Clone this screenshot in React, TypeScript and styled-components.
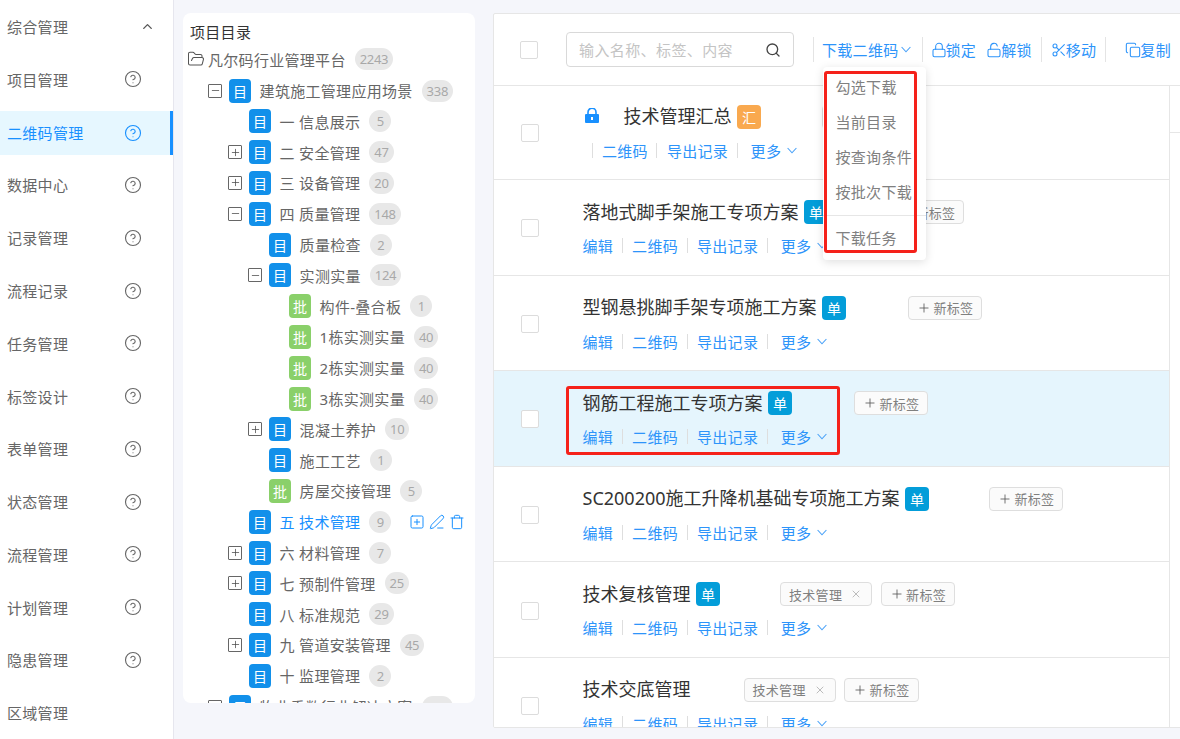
import React from "react";
import styled, { createGlobalStyle } from "styled-components";
import {
  ChevronUp,
  CircleHelp,
  Copy,
  FolderOpen,
  Lock,
  LockOpen,
  Minus,
  PenLine,
  Plus,
  Scissors,
  Search,
  SquarePlus,
  Trash,
  X,
} from "lucide-react";

const FONT = `"Noto Sans", "Noto Sans CJK SC", sans-serif`;
const LINK = "#2d94fa";

const Global = createGlobalStyle`
  html, body { margin: 0; padding: 0; height: 100%; overflow: hidden; background: #f5f6fb; }
  body { font-family: ${FONT}; letter-spacing: .3px; }
  * { box-sizing: border-box; }
`;

const Page = styled.div`
  display: flex;
  width: 1180px;
  height: 739px;
  overflow: hidden;
  background: #f5f6fb;
`;

/* ---------- sidebar ---------- */
const Sidebar = styled.nav`
  display: flex;
  flex-direction: column;
  flex: 0 0 174px;
  height: 739px;
  padding-top: 4.7px;
  background: #fff;
  border-right: 1px solid #e6e6ee;
  overflow: hidden;
`;

const SideItem = styled.div<{ $active?: boolean; $chevron?: boolean }>`
  display: flex;
  flex: none;
  align-items: center;
  justify-content: space-between;
  height: 44px;
  margin-top: ${(p) => (p.$active ? 0.5 : 0)}px;
  margin-bottom: ${(p) => (p.$active ? 8.27 : 8.77)}px;
  padding: 0 ${(p) => (p.$chevron ? 18 : p.$active ? 28 : 31)}px 0 7px;
  font-size: 15px;
  color: ${(p) => (p.$active ? "#1890ff" : "#666")};
  background: ${(p) => (p.$active ? "#e6f7ff" : "transparent")};
  border-right: ${(p) => (p.$active ? "3px solid #1890ff" : "0")};
`;

/* ---------- tree ---------- */
const TreePanel = styled.section`
  flex: 0 0 292px;
  height: 690px;
  margin: 13px 18px 0 9px;
  padding-top: 9px;
  background: #fff;
  border-radius: 8px;
  overflow: hidden;
`;

const TreeTitle = styled.div`
  height: 21.6px;
  line-height: 21px;
  padding-left: 7px;
  font-size: 15px;
  color: #333;
`;

const TreeRow = styled.div<{ $level: number }>`
  display: flex;
  align-items: center;
  height: ${(p) => (p.$level === 0 ? 31.6 : 30.8)}px;
  padding-left: ${(p) => (p.$level === 0 ? 4 : 25 + (p.$level - 1) * 20)}px;
  padding-right: 10px;
`;

const ExpanderSlot = styled.span`
  flex: 0 0 21px;
  display: flex;
`;

const Expander = styled.span`
  display: flex;
  align-items: center;
  justify-content: center;
  width: 14px;
  height: 14px;
  border: 1px solid #666;
  border-radius: 1px;
  color: #444;
`;

const TypeBadge = styled.span<{ $kind: "dir" | "batch" }>`
  flex: 0 0 22px;
  height: 24px;
  display: flex;
  align-items: center;
  justify-content: center;
  margin-right: 8.6px;
  border-radius: 4px;
  font-size: 14px;
  letter-spacing: 0;
  color: #fff;
  background: ${(p) => (p.$kind === "dir" ? "#1290ea" : "#8ad06a")};
`;

const TreeLabel = styled.span<{ $active?: boolean }>`
  font-size: 15px;
  white-space: pre;
  color: ${(p) => (p.$active ? "#1890ff" : "#666")};
`;

const RootLabel = styled(TreeLabel)`
  margin-left: 3px;
`;

const Count = styled.span`
  min-width: 22px;
  height: 22px;
  margin-left: 9px;
  padding: 0 5px;
  display: flex;
  align-items: center;
  justify-content: center;
  border-radius: 11px;
  background: #e8e8e8;
  color: #a8a8a8;
  font-size: 13px;
  letter-spacing: -0.3px;
`;

const TreeActions = styled.span`
  margin-left: auto;
  display: flex;
  align-items: center;
  gap: 4px;
  color: #1890ff;
`;

/* ---------- main ---------- */
const Main = styled.section`
  position: relative;
  flex: 0 0 720px;
  height: 715px;
  margin-top: 13px;
  background: #fff;
  border: 1px solid #e6e6e6;
  border-radius: 2px;
  overflow: hidden;
`;

const Toolbar = styled.header`
  display: flex;
  align-items: center;
  height: 72px;
  padding-left: 26px;
  border-bottom: 1px solid #e6e6e6;
`;

const Check = styled.span<{ $nudge?: boolean }>`
  flex: 0 0 18px;
  height: 18px;
  margin-top: ${(p) => (p.$nudge ? 2 : 0)}px;
  background: #fff;
  border: 1px solid #dcdcdc;
  border-radius: 2px;
`;

const SearchBox = styled.div`
  display: flex;
  align-items: center;
  flex: 0 0 228px;
  min-width: 0;
  height: 35px;
  margin: 0 19px 0 28px;
  padding: 0 12px;
  border: 1px solid #d9d9d9;
  border-radius: 4px;
  color: #444;
`;

const SearchInput = styled.input`
  flex: 1;
  width: 100%;
  min-width: 0;
  border: 0;
  outline: 0;
  padding: 0;
  font: 15px ${FONT};
  letter-spacing: .4px;
  background: transparent;
  &::placeholder { color: #c4c4c4; opacity: 1; }
`;

const ToolSep = styled.span<{ $after?: number }>`
  flex: 0 0 1px;
  height: 25px;
  background: #e4e4e4;
  margin-right: ${(p) => p.$after ?? 10}px;
`;

const ToolItem = styled.span<{ $after?: number }>`
  display: inline-flex;
  align-items: center;
  flex: none;
  margin-right: ${(p) => p.$after ?? 9}px;
  font-size: 15px;
  color: ${LINK};
  white-space: nowrap;
`;

const ToolIcon = styled.span`
  display: flex;
  margin-right: -1px;
`;

const Caret = ({ gap = 2 }: { gap?: number }) => (
  <svg width="10" height="7" viewBox="0 0 10 7" fill="none" stroke="#4aa2f8" strokeWidth="1.1" style={{ marginLeft: gap }}>
    <path d="M.6 1 5 5.8 9.4 1" />
  </svg>
);

const Menu = styled.div`
  position: absolute;
  left: 329px;
  top: 53px;
  z-index: 5;
  width: 103px;
  height: 193px;
  padding-top: 2.5px;
  background: #fff;
  border-radius: 4px;
  box-shadow: 0 2px 10px rgba(0, 0, 0, .13);
`;

const MenuItem = styled.div`
  height: 35px;
  line-height: 35px;
  padding-left: 12.5px;
  font-size: 15px;
  color: #808080;
  white-space: nowrap;
`;

const MenuDivider = styled.div`
  height: 1px;
  margin: 5.5px 0 5px;
  background: #e6e6e6;
`;

const Annotation = styled.div<{ $left: number; $top: number; $w: number; $h: number }>`
  position: absolute;
  left: ${(p) => p.$left}px;
  top: ${(p) => p.$top}px;
  width: ${(p) => p.$w}px;
  height: ${(p) => p.$h}px;
  border: 3px solid #f5211a;
  border-radius: 3px;
  pointer-events: none;
`;

const Body = styled.div`
  display: flex;
`;

const List = styled.div`
  flex: 0 0 676px;
  border-right: 1px solid #e6e6e6;
`;

const Strip = styled.div`
  flex: 1;
  height: 47px;
  border-bottom: 1px solid #e6e6e6;
`;

const Row = styled.article<{ $first?: boolean; $selected?: boolean }>`
  position: relative;
  display: flex;
  align-items: center;
  height: ${(p) => (p.$first ? 94 : 95.6)}px;
  padding-left: 27px;
  background: ${(p) => (p.$selected ? "#e5f5fd" : "#fff")};
  border-bottom: 1px solid #e6e6e6;
`;

const RowBody = styled.div<{ $first?: boolean }>`
  align-self: flex-start;
  margin-left: 43.5px;
  padding-top: ${(p) => (p.$first ? 19 : 20)}px;
`;

const TitleLine = styled.div`
  display: flex;
  align-items: center;
  height: 24px;
`;

const LockMark = styled.svg`
  flex: none;
  margin: -3px 25px 0 2px;
`;

const Title = styled.span<{ $locked?: boolean }>`
  margin-top: ${(p) => (p.$locked ? -4 : -3)}px;
  font-size: 18px;
  letter-spacing: 0;
  color: #333;
  white-space: nowrap;
`;

const KindBadge = styled.span<{ $kind: "single" | "sum" }>`
  flex: 0 0 24px;
  height: 24px;
  margin-left: 5.5px;
  display: flex;
  align-items: center;
  justify-content: center;
  border-radius: 4px;
  font-size: 14px;
  letter-spacing: 0;
  color: #fff;
  background: ${(p) => (p.$kind === "single" ? "#039dd9" : "#f9a94f")};
`;

const Tags = styled.div<{ $offset: number }>`
  display: flex;
  gap: 8.5px;
  margin-left: ${(p) => p.$offset}px;
`;

const Tag = styled.span`
  display: inline-flex;
  align-items: center;
  height: 24px;
  padding: 0 8px;
  background: #fbfbfb;
  border: 1px solid #dedede;
  border-radius: 4px;
  font-size: 13px;
  color: #808080;
  white-space: nowrap;
`;

const TagPlus = styled(Plus)`
  margin-right: 2.4px;
  color: #555;
`;

const TagClose = styled(X)`
  margin: 0 1px 0 8px;
  color: #999;
`;

const Actions = styled.div<{ $indent?: boolean }>`
  display: flex;
  align-items: center;
  height: 20px;
  margin-top: 11.5px;
  margin-left: ${(p) => (p.$indent ? 9 : 0)}px;
`;

const ActionLink = styled.span`
  font-size: 15px;
  color: ${LINK};
  white-space: nowrap;
`;

const ActionSep = styled.span<{ $after?: number }>`
  flex: 0 0 1px;
  height: 15px;
  background: #dedede;
  margin: 0 ${(p) => p.$after ?? 9.5}px 0 0;
`;

const LinkGap = styled.span`
  flex: 0 0 8.5px;
`;

const GlyphLock = () => (
  <LockMark width="14" height="15" viewBox="0 0 14 15">
    <path d="M3 6.5V4.2a4 4 0 0 1 8 0v2.3" fill="none" stroke="#1890ff" strokeWidth="1.6" />
    <rect x="0" y="6" width="14" height="9" rx="1" fill="#1890ff" />
    <rect x="6" y="9" width="2" height="3" fill="#fff" />
  </LockMark>
);

const sideItems = ["项目管理", "二维码管理", "数据中心", "记录管理", "流程记录", "任务管理", "标签设计", "表单管理", "状态管理", "流程管理", "计划管理", "隐患管理"];

type Node = { level: number; label: string; count: number; kind?: "dir" | "batch"; exp?: "plus" | "minus"; active?: boolean };

const tree: Node[] = [
  { level: 1, label: "建筑施工管理应用场景", count: 338, exp: "minus" },
  { level: 2, label: "一 信息展示", count: 5 },
  { level: 2, label: "二 安全管理", count: 47, exp: "plus" },
  { level: 2, label: "三 设备管理", count: 20, exp: "plus" },
  { level: 2, label: "四 质量管理", count: 148, exp: "minus" },
  { level: 3, label: "质量检查", count: 2 },
  { level: 3, label: "实测实量", count: 124, exp: "minus" },
  { level: 4, label: "构件-叠合板", count: 1, kind: "batch" },
  { level: 4, label: "1栋实测实量", count: 40, kind: "batch" },
  { level: 4, label: "2栋实测实量", count: 40, kind: "batch" },
  { level: 4, label: "3栋实测实量", count: 40, kind: "batch" },
  { level: 3, label: "混凝土养护", count: 10, exp: "plus" },
  { level: 3, label: "施工工艺", count: 1 },
  { level: 3, label: "房屋交接管理", count: 5, kind: "batch" },
  { level: 2, label: "五 技术管理", count: 9, active: true },
  { level: 2, label: "六 材料管理", count: 7, exp: "plus" },
  { level: 2, label: "七 预制件管理", count: 25, exp: "plus" },
  { level: 2, label: "八 标准规范", count: 29 },
  { level: 2, label: "九 管道安装管理", count: 45, exp: "plus" },
  { level: 2, label: "十 监理管理", count: 2 },
  { level: 1, label: "牧业重数行业解决方案", count: 120, exp: "minus" },
];

type Item = { title: string; kind?: "single" | "sum"; tag?: string; offset: number; locked?: boolean; selected?: boolean };

const items: Item[] = [
  { title: "技术管理汇总", kind: "sum", offset: 61, locked: true },
  { title: "落地式脚手架施工专项方案", kind: "single", offset: 62 },
  { title: "型钢悬挑脚手架专项施工方案", kind: "single", offset: 62 },
  { title: "钢筋工程施工专项方案", kind: "single", offset: 62, selected: true },
  { title: "SC200200施工升降机基础专项施工方案", kind: "single", offset: 60 },
  { title: "技术复核管理", kind: "single", offset: 60, tag: "技术管理" },
  { title: "技术交底管理", offset: 53, tag: "技术管理" },
];

export default function App() {
  return (
    <Page>
      <Global />
      <Sidebar>
        <SideItem $chevron>
          综合管理
          <ChevronUp size={15} strokeWidth={2.2} color="#555" />
        </SideItem>
        {sideItems.map((s) => (
          <SideItem key={s} $active={s === "二维码管理"}>
            {s}
            <CircleHelp size={18} strokeWidth={1.5} />
          </SideItem>
        ))}
        <SideItem>区域管理</SideItem>
      </Sidebar>

      <TreePanel>
        <TreeTitle>项目目录</TreeTitle>
        <TreeRow $level={0}>
          <FolderOpen size={18} strokeWidth={1.4} color="#555" />
          <RootLabel>凡尔码行业管理平台</RootLabel>
          <Count>2243</Count>
        </TreeRow>
        {tree.map((n) => (
          <TreeRow key={n.label} $level={n.level}>
            <ExpanderSlot>
              {n.exp && (
                <Expander>
                  {n.exp === "plus" ? <Plus size={11} strokeWidth={1.6} /> : <Minus size={11} strokeWidth={1.6} />}
                </Expander>
              )}
            </ExpanderSlot>
            <TypeBadge $kind={n.kind ?? "dir"}>{n.kind === "batch" ? "批" : "目"}</TypeBadge>
            <TreeLabel $active={n.active}>{n.label}</TreeLabel>
            <Count>{n.count}</Count>
            {n.active && (
              <TreeActions>
                <SquarePlus size={16} strokeWidth={1.5} />
                <PenLine size={16} strokeWidth={1.5} />
                <Trash size={16} strokeWidth={1.5} />
              </TreeActions>
            )}
          </TreeRow>
        ))}
      </TreePanel>

      <Main>
        <Toolbar>
          <Check />
          <SearchBox>
            <SearchInput placeholder="输入名称、标签、内容" readOnly />
            <Search size={16} strokeWidth={2} />
          </SearchBox>
          <ToolSep $after={8} />
          <ToolItem $after={11}>
            下载二维码
            <Caret />
          </ToolItem>
          <ToolSep $after={8} />
          <ToolItem $after={10}>
            <ToolIcon><Lock size={16} strokeWidth={1.6} /></ToolIcon>
            锁定
          </ToolItem>
          <ToolItem>
            <ToolIcon><LockOpen size={16} strokeWidth={1.6} /></ToolIcon>
            解锁
          </ToolItem>
          <ToolSep $after={9} />
          <ToolItem>
            <ToolIcon><Scissors size={16} strokeWidth={1.6} /></ToolIcon>
            移动
          </ToolItem>
          <ToolSep $after={19} />
          <ToolItem>
            <ToolIcon><Copy size={16} strokeWidth={1.6} /></ToolIcon>
            复制
          </ToolItem>
          <ToolSep />
        </Toolbar>

        <Menu>
          <MenuItem>勾选下载</MenuItem>
          <MenuItem>当前目录</MenuItem>
          <MenuItem>按查询条件</MenuItem>
          <MenuItem>按批次下载</MenuItem>
          <MenuDivider />
          <MenuItem>下载任务</MenuItem>
          <Annotation $left={1} $top={4} $w={93} $h={182} />
        </Menu>

        <Body>
          <List>
            {items.map((it, i) => (
              <Row key={it.title} $first={i === 0} $selected={it.selected}>
                <Check $nudge={i > 0} />
                <RowBody $first={i === 0}>
                  <TitleLine>
                    {it.locked && <GlyphLock />}
                    <Title $locked={it.locked}>{it.title}</Title>
                    {it.kind && <KindBadge $kind={it.kind}>{it.kind === "sum" ? "汇" : "单"}</KindBadge>}
                    <Tags $offset={it.offset}>
                      {it.tag && (
                        <Tag>
                          {it.tag}
                          <TagClose size={12} strokeWidth={1.3} />
                        </Tag>
                      )}
                      <Tag>
                        <TagPlus size={14} strokeWidth={1.4} />
                        新标签
                      </Tag>
                    </Tags>
                  </TitleLine>
                  <Actions $indent={it.locked}>
                    {it.locked ? (
                      <ActionSep />
                    ) : (
                      <>
                        <ActionLink>编辑</ActionLink>
                        <LinkGap />
                        <ActionSep />
                      </>
                    )}
                    <ActionLink>二维码</ActionLink>
                    <LinkGap />
                    <ActionSep />
                    <ActionLink>导出记录</ActionLink>
                    <LinkGap />
                    <ActionSep $after={13} />
                    <ActionLink>更多</ActionLink>
                    <Caret gap={6} />
                  </Actions>
                </RowBody>
                {it.selected && <Annotation $left={72} $top={15} $w={274} $h={69} />}
              </Row>
            ))}
          </List>
          <Strip />
        </Body>
      </Main>
    </Page>
  );
}
